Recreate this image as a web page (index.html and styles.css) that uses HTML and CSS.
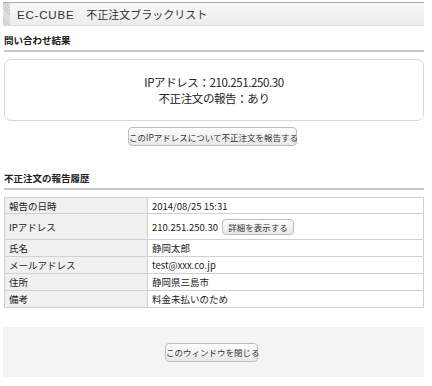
FILE: index.html
```html
<!DOCTYPE html>
<html lang="ja">
<head>
  <meta charset="UTF-8">
  <title>EC-CUBE 不正注文ブラックリスト</title>
  <link rel="stylesheet" href="styles.css">
</head>
<body>
  <div class="page">
    <div class="header">
      <h1><span class="brand">EC-CUBE</span>不正注文ブラックリスト</h1>
    </div>

    <h2>問い合わせ結果</h2>
    <div class="result">
      <p>IPアドレス：210.251.250.30</p>
      <p>不正注文の報告：あり</p>
    </div>
    <div class="actions">
      <button class="btn btn-report">このIPアドレスについて不正注文を報告する</button>
    </div>

    <h2 class="history-title">不正注文の報告履歴</h2>
    <table class="history">
      <tr class="row-small"><th>報告の日時</th><td>2014/08/25 15:31</td></tr>
      <tr class="row-ip"><th>IPアドレス</th><td>210.251.250.30 <button class="btn btn-small">詳細を表示する</button></td></tr>
      <tr><th>氏名</th><td>静岡太郎</td></tr>
      <tr><th>メールアドレス</th><td>test@xxx.co.jp</td></tr>
      <tr><th>住所</th><td>静岡県三島市</td></tr>
      <tr><th>備考</th><td>料金未払いのため</td></tr>
    </table>

    <div class="footer">
      <button class="btn btn-close">このウィンドウを閉じる</button>
    </div>
  </div>
</body>
</html>
```

FILE: styles.css
```css
body {
  margin: 0;
  font-family: "Noto Sans CJK JP", "Liberation Sans", sans-serif;
  font-size: 10px;
  color: #222;
  background: #fff;
}
.page { width: 421px; margin: 2px 0 0 3px; }

/* ヘッダー */
.header {
  height: 22px;
  border-top: 1px solid #a8a8b0;
  border-bottom: 1px solid #ddd;
  background: linear-gradient(#f7f7f7, #ececec);
  display: flex;
  align-items: center;
  position: relative;
  padding-left: 14px;
}
.header::before {
  content: "";
  position: absolute;
  left: 0; top: 0; bottom: 0;
  width: 7px;
  background: repeating-linear-gradient(45deg, #ccc 0 1px, #e6e6e6 1px 2px);
}
.header h1 {
  margin: 0;
  font-size: 11px;
  font-weight: normal;
  color: #333;
  white-space: nowrap;
}
.header .brand {
  font-family: "Liberation Sans", sans-serif;
  font-size: 11.5px;
  letter-spacing: 0.8px;
  margin-right: 12px;
}

h2 {
  margin: 7px 0 0 1px;
  padding-bottom: 2px;
  font-size: 9.5px;
  font-weight: bold;
  color: #222;
  border-bottom: 2px solid #c4c4c4;
  line-height: 15px;
}
.history-title { margin-top: 25px; }

.result {
  margin: 7px 0 0 1px;
  height: 60px;
  border: 1px solid #d6d6d6;
  border-radius: 7px;
  display: flex;
  flex-direction: column;
  justify-content: center;
  align-items: center;
  font-size: 11.5px;
  letter-spacing: -0.4px;
  color: #222;
}
.result p { margin: 0; line-height: 16px; white-space: nowrap; }

.actions {
  display: flex;
  justify-content: center;
  margin-top: 6px;
  padding-right: 2px;
}

.btn {
  font-family: inherit;
  font-size: 8.5px;
  color: #333;
  background: linear-gradient(#fdfdfd, #e8e8e8);
  border: 1px solid #bdbdbd;
  border-radius: 4px;
  padding: 0;
  white-space: nowrap;
  cursor: pointer;
}
.btn-report { width: 169px; height: 19px; }
.btn-small { width: 72px; height: 16px; margin-left: 2px; }
.btn-close { width: 93px; height: 19px; }

.history {
  margin-top: 7px;
  margin-left: 1px;
  width: 420px;
  border-collapse: collapse;
}
.history th, .history td {
  border: 1px solid #d0d0d0;
  height: 16px;
  padding: 0 4px;
  text-align: left;
  font-weight: normal;
  font-size: 9.5px;
  line-height: 14px;
  white-space: nowrap;
}
.history th { width: 134px; background: #f0f0f0; }
.history td { background: #fff; }
.history .row-small th, .history .row-small td { height: 15px; }
.history .row-ip th, .history .row-ip td { height: 25px; }

.footer {
  margin-top: 19px;
  height: 50px;
  background: #f4f4f4;
  display: flex;
  align-items: center;
  justify-content: center;
  padding-right: 4px;
}
```
